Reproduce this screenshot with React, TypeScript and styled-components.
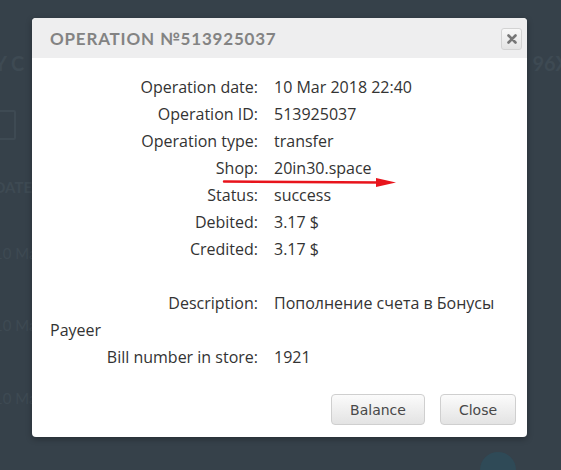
import React from 'react';
import styled, { createGlobalStyle } from 'styled-components';

const GlobalStyle = createGlobalStyle`
  html, body {
    margin: 0;
    padding: 0;
    background: #36414a;
  }
  #root {
    height: 470px;
    overflow: hidden;
  }
`;

const Page = styled.div`
  position: relative;
  height: 470px;
  width: 561px;
  overflow: hidden;
  background: #36414a;
  font-family: 'Lato', 'Liberation Sans', sans-serif;
`;

const BackdropText = styled.div`
  display: flex;
  flex-direction: column;
  padding: 48px 0 0 0;
  color: #3e4a53;
  font-size: 15px;
`;

const BackRow = styled.div<{ h: number }>`
  display: flex;
  justify-content: space-between;
  height: ${({ h }) => h}px;
  align-items: center;
  margin-left: -6px;
  margin-right: -8px;
`;

const BackIcon = styled.div`
  width: 20px;
  height: 26px;
  border: 2px solid #3e4a53;
  border-radius: 2px;
  margin-left: -2px;
`;

const BackCircle = styled.div`
  position: absolute;
  left: 480px;
  top: 452px;
  width: 36px;
  height: 36px;
  border-radius: 50%;
  background: #2f4a57;
`;

const Modal = styled.div`
  position: absolute;
  left: 32px;
  top: 18px;
  width: 495px;
  height: 419px;
  background: #fff;
  border-radius: 4px;
  box-shadow: 0 2px 6px rgba(0, 0, 0, 0.3);
  display: flex;
  flex-direction: column;
  overflow: hidden;
`;

const Header = styled.div`
  height: 40px;
  flex: none;
  background: #eeeeef;
  display: flex;
  align-items: center;
  justify-content: space-between;
  padding: 0 5px 0 18px;
`;

const Title = styled.div`
  font-family: 'Lato', 'Liberation Sans', sans-serif;
  font-weight: 700;
  font-size: 17px;
  letter-spacing: 0.8px;
  color: #838383;
  margin-top: 1px;
`;

const CloseX = styled.button`
  width: 21px;
  height: 22px;
  margin-top: 2px;
  padding: 0;
  border: 1px solid #d3d3d3;
  border-radius: 3px;
  background: linear-gradient(#f8f8f8, #e4e4e4);
  display: flex;
  align-items: center;
  justify-content: center;
`;

const Body = styled.div`
  flex: 1;
  padding: 16px 18px 0 18px;
  font-family: 'Open Sans', 'Liberation Sans', sans-serif;
  font-size: 16px;
  color: #333;
`;

const Row = styled.div<{ gapAbove?: boolean }>`
  line-height: 27px;
  margin-top: ${({ gapAbove }) => (gapAbove ? '27px' : '0')};
`;

const Label = styled.span`
  display: inline-block;
  width: 208px;
  text-align: right;
  margin-right: 16px;
`;

const Footer = styled.div`
  display: flex;
  justify-content: flex-end;
  gap: 15px;
  padding: 0 11px 12px 0;
`;

const Button = styled.button<{ w: number }>`
  width: ${({ w }) => w}px;
  height: 31px;
  border: 1px solid #cfcfcf;
  border-radius: 4px;
  background: linear-gradient(#fbfbfb, #e3e3e3);
  font-family: 'DejaVu Sans', Verdana, sans-serif;
  font-size: 14px;
  color: #484848;
  padding: 0;
`;

const Arrow = styled.svg`
  position: absolute;
  left: 222px;
  top: 175px;
`;

const rows: [string, string][] = [
  ['Operation date:', '10 Mar 2018 22:40'],
  ['Operation ID:', '513925037'],
  ['Operation type:', 'transfer'],
  ['Shop:', '20in30.space'],
  ['Status:', 'success'],
  ['Debited:', '3.17 $'],
  ['Credited:', '3.17 $'],
];

const App = () => (
  <Page>
    <GlobalStyle />
    <BackdropText>
      <BackRow h={30}>
        <span style={{ fontWeight: 700, fontSize: 20 }}>Y C</span>
        <span style={{ fontWeight: 700, fontSize: 20 }}>96X</span>
      </BackRow>
      <BackRow h={94}>
        <BackIcon />
      </BackRow>
      <BackRow h={30}>
        <span style={{ fontWeight: 700 }}>DATE</span>
      </BackRow>
      <BackRow h={102}>
        <span>10 Mar</span>
      </BackRow>
      <BackRow h={42}>
        <span>10 Mar</span>
      </BackRow>
      <BackRow h={104}>
        <span>10 Mar</span>
      </BackRow>
    </BackdropText>
    <BackCircle />
    <Modal>
      <Header>
        <Title>OPERATION №513925037</Title>
        <CloseX>
          <svg width="10" height="10" viewBox="0 0 10 10">
            <path d="M1.5 1.5L8.5 8.5M8.5 1.5L1.5 8.5" stroke="#777" strokeWidth="2.6" strokeLinecap="round" />
          </svg>
        </CloseX>
      </Header>
      <Body>
        {rows.map(([l, v]) => (
          <Row key={l}>
            <Label>{l}</Label>
            {v}
          </Row>
        ))}
        <Row gapAbove>
          <Label>Description:</Label>
          Пополнение счета в Бонусы Payeer
        </Row>
        <Row>
          <Label>Bill number in store:</Label>
          1921
        </Row>
      </Body>
      <Footer>
        <Button w={94}>Balance</Button>
        <Button w={76}>Close</Button>
      </Footer>
    </Modal>
    <Arrow width="180" height="14" viewBox="0 0 180 14">
      <path d="M2 6.5 L158 7.5" stroke="#e8141c" strokeWidth="2.4" strokeLinecap="round" />
      <path d="M154 3 L174 7.5 L154 12 Z" fill="#e8141c" />
    </Arrow>
  </Page>
);

export default App;
